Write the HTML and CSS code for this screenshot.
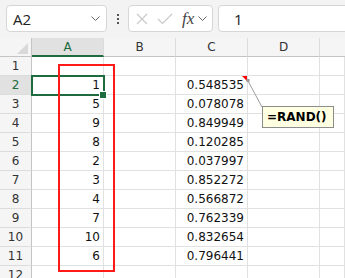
FILE: index.html
```html
<!DOCTYPE html>
<html>
<head>
<meta charset="utf-8">
<link rel="stylesheet" href="styles.css">
</head>
<body>
<div class="app">
  <div class="toolbar">
    <div class="namebox">
      <span class="name">A2</span>
      <svg class="chev" width="9" height="6" viewBox="0 0 9 6"><polyline points="0.5,0.5 4.5,4.5 8.5,0.5" fill="none" stroke="#666" stroke-width="1"/></svg>
    </div>
    <div class="vdots"><i></i><i></i><i></i></div>
    <div class="fnbox">
      <svg class="icon-x" width="12" height="12" viewBox="0 0 12 12"><path d="M1 1 L11 11 M11 1 L1 11" stroke="#c8c8c8" stroke-width="1.1" fill="none"/></svg>
      <svg class="icon-check" width="16" height="12" viewBox="0 0 16 12"><polyline points="1,6 5.5,10.5 15,1" fill="none" stroke="#c8c8c8" stroke-width="1.1"/></svg>
      <span class="fx">fx</span>
      <svg class="chev" width="9" height="6" viewBox="0 0 9 6"><polyline points="0.5,0.5 4.5,4.5 8.5,0.5" fill="none" stroke="#666" stroke-width="1"/></svg>
    </div>
    <div class="formula"><span>1</span></div>
  </div>
  <div class="sheet">
    <div class="grid">
      <div class="hd corner"><span class="tri"></span></div>
      <div class="hd col sel">A</div>
      <div class="hd col">B</div>
      <div class="hd col">C</div>
      <div class="hd col">D</div>
      <div class="hd col last"></div>

      <div class="rh">1</div><div class="c"></div><div class="c"></div><div class="c"></div><div class="c"></div><div class="c"></div>
      <div class="rh sel">2</div><div class="c n">1</div><div class="c"></div><div class="c n">0.548535</div><div class="c"></div><div class="c"></div>
      <div class="rh">3</div><div class="c n">5</div><div class="c"></div><div class="c n">0.078078</div><div class="c"></div><div class="c"></div>
      <div class="rh">4</div><div class="c n">9</div><div class="c"></div><div class="c n">0.849949</div><div class="c"></div><div class="c"></div>
      <div class="rh">5</div><div class="c n">8</div><div class="c"></div><div class="c n">0.120285</div><div class="c"></div><div class="c"></div>
      <div class="rh">6</div><div class="c n">2</div><div class="c"></div><div class="c n">0.037997</div><div class="c"></div><div class="c"></div>
      <div class="rh">7</div><div class="c n">3</div><div class="c"></div><div class="c n">0.852272</div><div class="c"></div><div class="c"></div>
      <div class="rh">8</div><div class="c n">4</div><div class="c"></div><div class="c n">0.566872</div><div class="c"></div><div class="c"></div>
      <div class="rh">9</div><div class="c n">7</div><div class="c"></div><div class="c n">0.762339</div><div class="c"></div><div class="c"></div>
      <div class="rh">10</div><div class="c n">10</div><div class="c"></div><div class="c n">0.832654</div><div class="c"></div><div class="c"></div>
      <div class="rh">11</div><div class="c n">6</div><div class="c"></div><div class="c n">0.796441</div><div class="c"></div><div class="c"></div>
      <div class="rh">12</div><div class="c"></div><div class="c"></div><div class="c"></div><div class="c"></div><div class="c"></div>
    </div>

    <div class="selection"></div>
    <div class="handle"></div>
    <div class="redbox"></div>
    <div class="note-flag"></div>
    <svg class="leader" width="30" height="40" viewBox="0 0 30 40"><line x1="2" y1="4" x2="16" y2="30" stroke="#9a9a9a" stroke-width="1"/><rect x="0.5" y="2" width="3" height="3" fill="#9a9a9a"/></svg>
    <div class="note">=RAND()</div>
  </div>
</div>
</body>
</html>
```

FILE: styles.css
```css
html, body {
  margin: 0;
  padding: 0;
  background: #ffffff;
  overflow: hidden;
}

.app {
  width: 345px;
  height: 278px;
  overflow: hidden;
  font-family: "DejaVu Sans", "Verdana", sans-serif;
}

/* ---------- formula toolbar ---------- */
.toolbar {
  height: 38px;
  box-sizing: border-box;
  background: #f3f3f3;
  display: flex;
  align-items: flex-start;
  padding: 5px 0 0 6px;
}

.namebox {
  width: 101px;
  height: 27px;
  box-sizing: border-box;
  background: #fff;
  border: 1px solid #d6d6d6;
  border-radius: 4px;
  display: flex;
  align-items: center;
  justify-content: space-between;
  padding: 0 6px 0 6px;
}

.name {
  font-family: "Open Sans", "Noto Sans", sans-serif;
  font-size: 15px;
  color: #222;
}

.chev {
  display: block;
}

.vdots {
  width: 21px;
  height: 27px;
  display: flex;
  flex-direction: column;
  align-items: center;
  justify-content: center;
  gap: 2px;
}

.vdots i {
  display: block;
  width: 2px;
  height: 2px;
  background: #555;
}

.fnbox {
  width: 85px;
  height: 27px;
  box-sizing: border-box;
  background: #fff;
  border: 1px solid #d6d6d6;
  border-radius: 4px;
  display: flex;
  align-items: center;
  padding-left: 7px;
}

.icon-x {
  display: block;
  margin-right: 9px;
}

.icon-check {
  display: block;
  margin-right: 9px;
}

.fx {
  font-family: "Liberation Serif", "DejaVu Serif", serif;
  font-style: italic;
  font-size: 17px;
  color: #444;
  margin-right: 4px;
  line-height: 1;
}

.formula {
  flex: 1;
  margin-left: 5px;
  margin-right: -10px;
  height: 27px;
  box-sizing: border-box;
  background: #fff;
  border: 1px solid #d6d6d6;
  border-radius: 4px;
  display: flex;
  align-items: center;
  padding-left: 15px;
  font-family: "Open Sans", "Noto Sans", sans-serif;
  font-size: 15px;
  color: #222;
}

/* ---------- sheet ---------- */
.sheet {
  position: relative;
}

.grid {
  display: grid;
  grid-template-columns: 32px 72px 72px 72px 72px 1fr;
  grid-auto-rows: 19px;
  font-size: 12px;
  line-height: 19px;
  color: #111;
}

.grid > div {
  box-sizing: border-box;
  white-space: nowrap;
  overflow: hidden;
}

.hd {
  background: #f5f5f5;
  border-right: 1px solid #dcdcdc;
  border-bottom: 1px solid #c4c4c4;
  text-align: center;
  color: #333;
}

.hd.corner {
  position: relative;
  border-right: 1px solid #c4c4c4;
}

.tri {
  position: absolute;
  right: 3px;
  bottom: 2px;
  width: 0;
  height: 0;
  border-left: 11px solid transparent;
  border-bottom: 11px solid #d9d9d9;
}

.hd.sel {
  background: #e1e1e1;
  border-bottom: 2px solid #1d6b3f;
  color: #1d6b3f;
}

.hd.last {
  border-right: none;
}

.rh {
  background: #f5f5f5;
  border-right: 1px solid #c4c4c4;
  border-bottom: 1px solid #dcdcdc;
  text-align: center;
  color: #333;
}

.rh.sel {
  background: #e1e1e1;
  color: #1d6b3f;
}

.c {
  border-right: 1px solid #e1e1e1;
  border-bottom: 1px solid #e1e1e1;
}

.c.n {
  text-align: right;
  padding-right: 3px;
  color: #111;
}

/* ---------- overlays ---------- */
.selection {
  position: absolute;
  left: 31px;
  top: 37px;
  width: 74px;
  height: 21px;
  box-sizing: border-box;
  border: 2px solid #1d6b3f;
}

.handle {
  position: absolute;
  left: 100px;
  top: 54px;
  width: 6px;
  height: 6px;
  background: #1d6b3f;
  box-shadow: 0 0 0 1px #fff;
}

.redbox {
  position: absolute;
  left: 58px;
  top: 26px;
  width: 57px;
  height: 208px;
  box-sizing: border-box;
  border: 2px solid #ff1a1a;
}

.note-flag {
  position: absolute;
  left: 242px;
  top: 38px;
  width: 0;
  height: 0;
  border-left: 5px solid transparent;
  border-top: 5px solid #ff0000;
}

.leader {
  position: absolute;
  left: 246px;
  top: 39px;
  display: block;
}

.note {
  position: absolute;
  left: 262px;
  top: 68px;
  width: 72px;
  height: 22px;
  box-sizing: border-box;
  background: #ffffe1;
  border: 1px solid #8c8c8c;
  font-family: "DejaVu Sans", sans-serif;
  font-weight: bold;
  font-size: 12px;
  line-height: 20px;
  padding-left: 4px;
  color: #000;
}
```
